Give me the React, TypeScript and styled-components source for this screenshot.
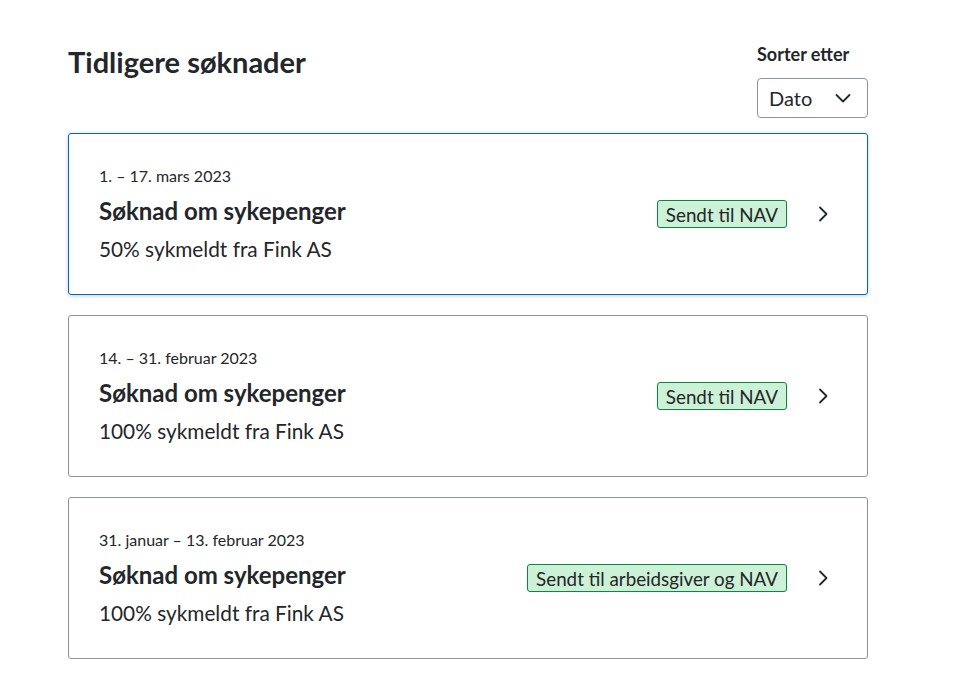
import React from 'react'
import styled, { createGlobalStyle, css } from 'styled-components'

const GlobalStyle = createGlobalStyle`
  body {
    margin: 0;
    background: #ffffff;
    color: #23262a;
    font-family: Lato, "Noto Sans", sans-serif;
  }
`

type Soknad = {
  periode: string
  tittel: string
  grad: string
  status: string
  active?: boolean
}

const soknader: Soknad[] = [
  {
    periode: '1. – 17. mars 2023',
    tittel: 'Søknad om sykepenger',
    grad: '50% sykmeldt fra Fink AS',
    status: 'Sendt til NAV',
    active: true,
  },
  {
    periode: '14. – 31. februar 2023',
    tittel: 'Søknad om sykepenger',
    grad: '100% sykmeldt fra Fink AS',
    status: 'Sendt til NAV',
  },
  {
    periode: '31. januar – 13. februar 2023',
    tittel: 'Søknad om sykepenger',
    grad: '100% sykmeldt fra Fink AS',
    status: 'Sendt til arbeidsgiver og NAV',
  },
]

const Chevron = () => (
  <svg width="24" height="24" viewBox="0 0 24 24" fill="none">
    <path
      d="M9 5.5l6.5 6.5-6.5 6.5"
      stroke="currentColor"
      strokeWidth="1.8"
      strokeLinecap="round"
      strokeLinejoin="round"
    />
  </svg>
)

const ChevronDown = () => (
  <svg width="24" height="24" viewBox="0 0 24 24" fill="none">
    <path
      d="M5.5 9l6.5 6.5 6.5-6.5"
      stroke="currentColor"
      strokeWidth="1.8"
      strokeLinecap="round"
      strokeLinejoin="round"
    />
  </svg>
)

export default function App() {
  return (
    <>
      <GlobalStyle />
      <Page>
        <Header>
          <Heading>Tidligere søknader</Heading>
          <Sort>
            <SortLabel>Sorter etter</SortLabel>
            <Select>
              <span>Dato</span>
              <ChevronDown />
            </Select>
          </Sort>
        </Header>
        <List>
          {soknader.map((s) => (
            <Card key={s.periode} $active={s.active}>
              <Info>
                <Periode>{s.periode}</Periode>
                <Title>{s.tittel}</Title>
                <Grad>{s.grad}</Grad>
              </Info>
              <Right>
                <Tag>{s.status}</Tag>
                <Arrow>
                  <Chevron />
                </Arrow>
              </Right>
            </Card>
          ))}
        </List>
      </Page>
    </>
  )
}

const Page = styled.div`
  width: 800px;
  padding: 42px 0 0 68px;
`

const Header = styled.div`
  display: flex;
  justify-content: space-between;
  align-items: flex-start;
  margin-bottom: 15px;
`

const Heading = styled.h2`
  margin: 2px 0 0;
  font-size: 29px;
  line-height: 36px;
  font-weight: 700;
`

const Sort = styled.div`
  display: flex;
  flex-direction: column;
  gap: 12px;
`

const SortLabel = styled.label`
  font-size: 18px;
  line-height: 24px;
  font-weight: 700;
`

const Select = styled.div`
  box-sizing: border-box;
  width: 111px;
  height: 40px;
  border: 1px solid #8f949a;
  border-radius: 4px;
  display: flex;
  align-items: center;
  justify-content: space-between;
  padding: 0 12px 0 11px;
  font-size: 20px;
`

const List = styled.div`
  display: flex;
  flex-direction: column;
  gap: 20px;
`

const Card = styled.div<{ $active?: boolean }>`
  box-sizing: border-box;
  height: 162px;
  border: 1px solid #8f949a;
  border-radius: 3px;
  padding: 0 38px 0 30px;
  display: flex;
  align-items: center;
  justify-content: space-between;

  ${({ $active }) =>
    $active &&
    css`
      border-color: #0067c5;
      box-shadow: 0 1px 4px rgba(0, 0, 0, 0.2);
    `}
`

const Info = styled.div`
  display: flex;
  flex-direction: column;
  gap: 8px;
`

const Periode = styled.span`
  font-size: 16px;
  line-height: 22px;
`

const Title = styled.span`
  font-size: 24px;
  line-height: 32px;
  font-weight: 700;
`

const Grad = styled.span`
  font-size: 20.8px;
  line-height: 28px;
`

const Right = styled.div`
  display: flex;
  align-items: center;
  gap: 24px;
`

const Tag = styled.span`
  box-sizing: border-box;
  height: 28px;
  display: flex;
  align-items: center;
  padding: 0 8px;
  background: #ccf1d6;
  border: 1px solid #06893a;
  border-radius: 3px;
  font-size: 18.8px;
`

const Arrow = styled.span`
  display: flex;
  color: #23262a;
  margin-right: -6px;
`
